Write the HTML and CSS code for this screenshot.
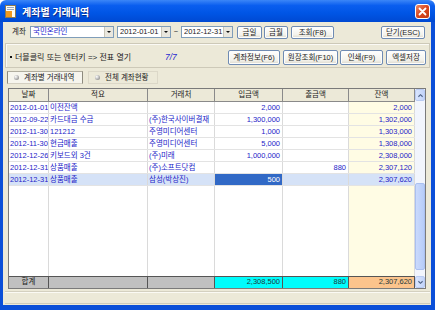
FILE: index.html
```html
<!DOCTYPE html>
<html lang="ko">
<head>
    <meta charset="UTF-8">
    <title>계좌별 거래내역</title>
    <link rel="stylesheet" href="styles.css">
</head>
<body>
    <div class="window">
        <div class="titlebar">
            <svg class="app-icon" viewBox="0 0 12 13">
                <rect x="0.5" y="0.5" width="10" height="12" fill="#fffdf4" stroke="#8a7a55"/>
                <rect x="1" y="6" width="6" height="6" fill="#f29a1e"/>
                <rect x="2" y="2" width="7" height="1" fill="#9aa7c0"/>
                <rect x="2" y="4" width="7" height="1" fill="#9aa7c0"/>
            </svg>
            <span class="title">계좌별 거래내역</span>
            <div class="close-box">
                <svg viewBox="0 0 13 13"><path d="M3.5 3.5 L9.5 9.5 M9.5 3.5 L3.5 9.5" stroke="#fff" stroke-width="1.8" stroke-linecap="round"/></svg>
            </div>
        </div>
        <div class="frame">
            <div class="toolbar">
                <span class="label">계좌</span>
                <div class="combo account"><span class="blue">국민온라인</span><i class="drop"></i></div>
                <div class="combo date"><span>2012-01-01</span><i class="drop"></i></div>
                <span class="tilde">~</span>
                <div class="combo date date-to"><span>2012-12-31</span><i class="drop"></i></div>
                <button class="btn b-today">금일</button>
                <button class="btn b-month">금월</button>
                <button class="btn b-search">조회(F8)</button>
                <button class="btn b-close">닫기(ESC)</button>
            </div>

            <div class="infobar">
                <span class="hint">더블클릭 또는 엔터키 =&gt; 전표 열기</span>
                <span class="count">7/7</span>
                <div class="actions">
                    <button class="btn b-info">계좌정보(F6)</button>
                    <button class="btn b-ledger">원장조회(F10)</button>
                    <button class="btn b-print">인쇄(F9)</button>
                    <button class="btn b-excel">엑셀저장</button>
                </div>
            </div>

            <div class="tabs">
                <div class="tab active"><i class="ball"></i>계좌별 거래내역</div>
                <div class="tab"><i class="ball"></i>전체 계좌현황</div>
            </div>

            <div class="grid">
                <div class="sheet">
                    <div class="row head">
                        <div>날짜</div><div>적요</div><div>거래처</div><div>입금액</div><div>출금액</div><div>잔액</div>
                    </div>
                    <div class="row">
                        <div>2012-01-01</div><div>이전잔액</div><div></div><div class="num">2,000</div><div class="num"></div><div class="num bal">2,000</div>
                    </div>
                    <div class="row">
                        <div>2012-09-22</div><div>카드대금 수금</div><div>(주)한국사이버결재</div><div class="num">1,300,000</div><div class="num"></div><div class="num bal">1,302,000</div>
                    </div>
                    <div class="row">
                        <div>2012-11-30</div><div>121212</div><div>주영미디어센터</div><div class="num">1,000</div><div class="num"></div><div class="num bal">1,303,000</div>
                    </div>
                    <div class="row">
                        <div>2012-11-30</div><div>현금매출</div><div>주영미디어센터</div><div class="num">5,000</div><div class="num"></div><div class="num bal">1,308,000</div>
                    </div>
                    <div class="row">
                        <div>2012-12-26</div><div>키보드외 3건</div><div>(주)미래</div><div class="num">1,000,000</div><div class="num"></div><div class="num bal">2,308,000</div>
                    </div>
                    <div class="row">
                        <div>2012-12-31</div><div>상품매출</div><div>(주)소프트닷컴</div><div class="num"></div><div class="num">880</div><div class="num bal">2,307,120</div>
                    </div>
                    <div class="row selected">
                        <div>2012-12-31</div><div>상품매출</div><div>삼성(박상진)</div><div class="num current">500</div><div class="num"></div><div class="num bal">2,307,620</div>
                    </div>
                    <div class="row filler">
                        <div></div><div></div><div></div><div></div><div></div><div class="bal"></div>
                    </div>
                    <div class="row total">
                        <div class="center">합계</div><div></div><div></div><div class="num cyan">2,308,500</div><div class="num cyan">880</div><div class="num orange">2,307,620</div>
                    </div>
                </div>
                <div class="vscroll">
                    <div class="sb-btn">
                        <svg viewBox="0 0 8 6"><path d="M1.5 4.5 L4 2 L6.5 4.5" fill="none" stroke="#4d6185" stroke-width="1.3"/></svg>
                    </div>
                    <div class="sb-track"><div class="sb-thumb"></div></div>
                    <div class="sb-btn">
                        <svg viewBox="0 0 8 6"><path d="M1.5 1.5 L4 4 L6.5 1.5" fill="none" stroke="#4d6185" stroke-width="1.3"/></svg>
                    </div>
                </div>
            </div>

            <div class="status"></div>
        </div>
    </div>
</body>
</html>
```

FILE: styles.css
```css
body {
    margin: 0;
    font-family: "Liberation Sans", "Noto Sans CJK KR", sans-serif;
    font-size: 7.5px;
    color: #222;
}
.window {
    width: 435px;
    height: 310px;
    display: flex;
    flex-direction: column;
}
.titlebar {
    height: 22px;
    flex: none;
    display: flex;
    align-items: center;
    border-radius: 6px 6px 0 0;
    background: linear-gradient(#3b86f7, #0a5eef 25%, #0055e5 60%, #0049d2);
}
.app-icon {
    width: 12px;
    height: 13px;
    margin-left: 5px;
}
.title {
    margin-left: 5px;
    color: #fff;
    font-weight: bold;
    font-size: 10px;
    text-shadow: 1px 1px 0 #0b2a8a;
}
.close-box {
    margin-left: auto;
    margin-right: 5px;
    width: 13px;
    height: 13px;
    border: 1px solid #fff;
    border-radius: 3px;
    background: linear-gradient(135deg, #ec8a6a, #d9461d 50%, #c23a14);
}
.close-box svg {
    display: block;
    width: 13px;
    height: 13px;
}
.frame {
    flex: 1;
    display: flex;
    flex-direction: column;
    background: #ece9d8;
    border: solid #0b4fd8;
    border-width: 0 4px 5px 3px;
}

/* top tool row */
.toolbar {
    height: 21px;
    flex: none;
    display: flex;
    align-items: flex-start;
    padding: 4px 6px 0 9px;
    box-sizing: border-box;
}
.label {
    width: 18px;
    line-height: 12px;
}
.combo {
    height: 12px;
    box-sizing: border-box;
    border: 1px solid #7f9db9;
    background: #fff;
    display: flex;
    align-items: center;
    padding-left: 2px;
    line-height: 10px;
}
.combo span {
    flex: 1;
    white-space: nowrap;
    overflow: hidden;
}
.drop {
    width: 8px;
    height: 10px;
    background: #e9e7de;
    border-left: 1px solid #c9c6b8;
    position: relative;
}
.drop::after {
    content: "";
    position: absolute;
    left: 2px;
    top: 4px;
    border: 2px solid transparent;
    border-top: 2px solid #111;
}
.account { width: 84px; margin-right: 3px; }
.date { width: 54px; }
.date-to { width: 52px; }
.blue { color: #2424d0; }
.tilde {
    width: 10px;
    text-align: center;
    line-height: 11px;
}
.btn {
    height: 13px;
    padding: 0;
    font-family: inherit;
    font-size: 7.5px;
    color: #222;
    border: 1px solid #6f8bb3;
    border-radius: 2px;
    background: linear-gradient(#ffffff, #f3f2ec 70%, #dcd8cc);
    box-shadow: inset 0 0 0 1px #fdfdfb;
    line-height: 11px;
}
.b-today { width: 25px; margin-left: 4px; }
.b-month { width: 24px; margin-left: 2px; }
.b-search { width: 43px; margin-left: 3px; }
.b-close { width: 44px; margin-left: auto; }

/* hint bar */
.infobar {
    height: 25px;
    flex: none;
    margin: 0 1px 0 2px;
    box-sizing: border-box;
    border: 1px solid #cdc9b8;
    box-shadow: inset 1px 1px 0 #fbfaf5;
    display: flex;
    align-items: flex-start;
    padding: 6px 3px 0 4px;
}
.hint {
    line-height: 15px;
    width: 155px;
    font-size: 8px;
}
.hint::before {
    content: "";
    display: inline-block;
    width: 2px;
    height: 2px;
    background: #111;
    margin: 0 3px 2px 0;
    vertical-align: middle;
}
.count {
    color: #2a2ad0;
    font-style: italic;
    font-size: 8.5px;
    line-height: 15px;
}
.actions {
    margin-left: auto;
    display: flex;
}
.actions .btn { height: 15px; line-height: 13px; }
.b-info { width: 52px; }
.b-ledger { width: 55px; margin-left: 3px; }
.b-print { width: 43px; margin-left: 2px; }
.b-excel { width: 40px; margin-left: 3px; }

/* tabs */
.tabs {
    height: 20px;
    flex: none;
    display: flex;
    padding: 3px 0 0 4px;
    box-sizing: border-box;
}
.tab {
    height: 13px;
    box-sizing: border-box;
    display: flex;
    align-items: center;
    padding-left: 6px;
    line-height: 11px;
    border: 1px solid #dcd8c8;
    width: 70px;
    margin-left: 5px;
}
.tab.active {
    width: 76px;
    margin-left: 0;
    background: #f6f5ee;
    border-color: #b0ad9f #8d8a7e #d4d0c2 #8d8a7e;
}
.ball {
    width: 5px;
    height: 5px;
    border-radius: 50%;
    margin-right: 5px;
    background: radial-gradient(circle at 35% 35%, #fff, #9b9b9b 70%, #666);
}

/* data grid */
.grid {
    margin-left: 5px;
    width: 418px;
    height: 201px;
    flex: none;
    box-sizing: border-box;
    border: 1px solid #7a7a7a;
    display: flex;
    background: #fff;
}
.sheet {
    width: 406px;
    display: flex;
    flex-direction: column;
}
.row {
    display: grid;
    grid-template-columns: 40px 99px 67px 68px 66px 66px;
    height: 12px;
    box-sizing: border-box;
    border-bottom: 1px solid #e3e3e3;
    color: #2424c8;
}
.row > div {
    border-right: 1px solid #dadada;
    line-height: 11px;
    padding-left: 1px;
    white-space: nowrap;
    overflow: hidden;
}
.row .num {
    text-align: right;
    padding: 0 2px 0 0;
}
.row .bal { background: #fffce4; }
.head {
    height: 13px;
    background: #ece9d8;
    color: #222;
    border-bottom: 1px solid #8a8a8a;
}
.head > div {
    text-align: center;
    padding: 0;
    line-height: 12px;
    border-right: 1px solid #8a8a8a;
}
.selected > div,
.selected .bal { background: #d5e2f7; }
.selected .current {
    background: #3169c6;
    color: #fff;
}
.filler {
    flex: 1;
    border-bottom: none;
}
.total {
    background: #c0c0c0;
    color: #1e3a3a;
    border-top: 1px solid #555;
    border-bottom: none;
}
.total > div { border-right: 1px solid #555; line-height: 10px; }
.total .center { text-align: center; padding: 0; color: #222; }
.total .cyan { background: #00fcfc; }
.total .orange { background: #fcc48c; }

/* scrollbar */
.vscroll {
    width: 10px;
    display: flex;
    flex-direction: column;
    background: #f2f5fd;
}
.sb-btn {
    height: 12px;
    box-sizing: border-box;
    border: 1px solid #b9cbf3;
    border-radius: 2px;
    background: linear-gradient(90deg, #d9e5fd, #c3d4fa);
    display: flex;
    align-items: center;
    justify-content: center;
}
.sb-btn svg {
    width: 7px;
    height: 5px;
}
.sb-track { flex: 1; }
.sb-thumb {
    margin-top: 82px;
    height: 87px;
    box-sizing: border-box;
    border: 1px solid #aac0f0;
    border-radius: 2px;
    background: linear-gradient(90deg, #cbdafc, #b6ccf9);
}

.status {
    flex: 1;
    margin: 2px 1px 1px 2px;
    border-top: 1px solid #d4d0c0;
    border-bottom: 1px solid #cfcbbb;
    box-shadow: inset 0 1px 0 #fbfaf4;
}
```
